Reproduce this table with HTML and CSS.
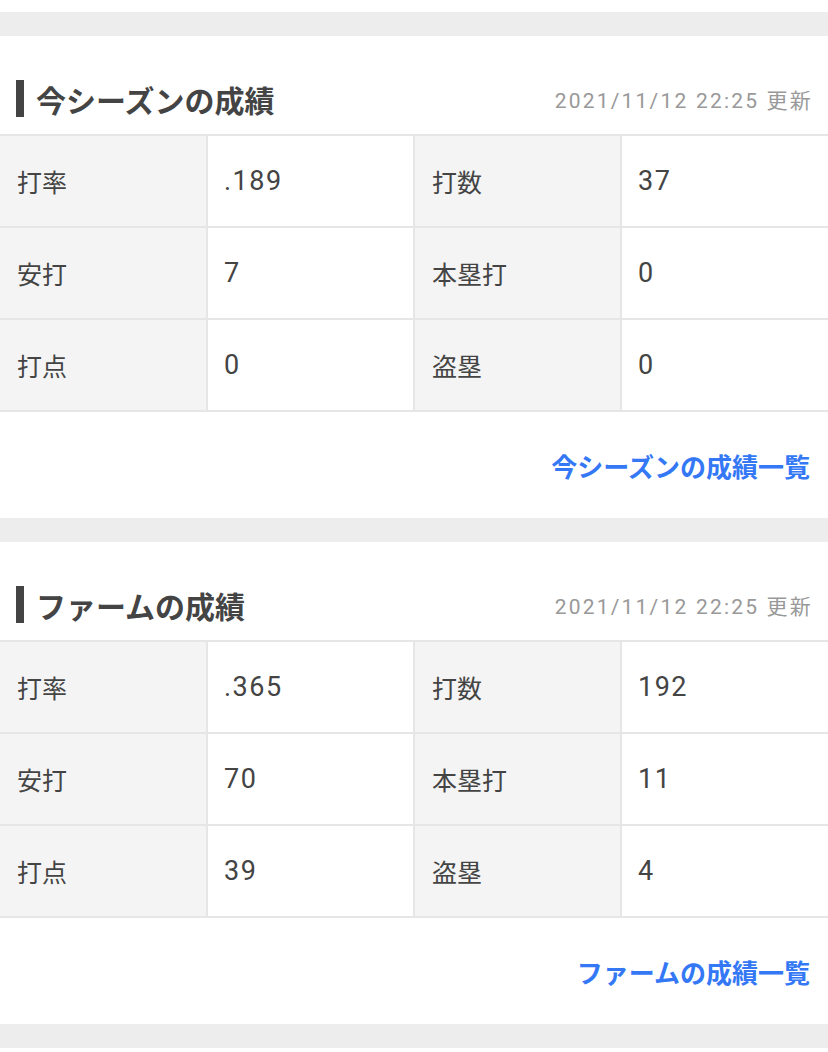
FILE: index.html
```html
<!DOCTYPE html>
<html lang="ja">
<head>
<meta charset="utf-8">
<link rel="stylesheet" href="styles.css">
</head>
<body>
<div class="top-space"></div>
<div class="divider"></div>
<section class="card">
  <div class="head">
    <h2 class="title">今シーズンの成績</h2>
    <span class="date">2021/11/12 22:25 更新</span>
  </div>
  <table class="stats">
    <tr><th>打率</th><td>.189</td><th>打数</th><td>37</td></tr>
    <tr><th>安打</th><td>7</td><th>本塁打</th><td>0</td></tr>
    <tr><th>打点</th><td>0</td><th>盗塁</th><td>0</td></tr>
  </table>
  <div class="more"><a href="#">今シーズンの成績一覧</a></div>
</section>
<div class="divider"></div>
<section class="card">
  <div class="head">
    <h2 class="title">ファームの成績</h2>
    <span class="date">2021/11/12 22:25 更新</span>
  </div>
  <table class="stats">
    <tr><th>打率</th><td>.365</td><th>打数</th><td>192</td></tr>
    <tr><th>安打</th><td>70</td><th>本塁打</th><td>11</td></tr>
    <tr><th>打点</th><td>39</td><th>盗塁</th><td>4</td></tr>
  </table>
  <div class="more"><a href="#">ファームの成績一覧</a></div>
</section>
<div class="divider"></div>
</body>
</html>
```
FILE: styles.css
```css
html, body {
  margin: 0;
  padding: 0;
  background: #fff;
  font-family: "Noto Sans CJK JP", "Noto Sans", sans-serif;
  color: #444;
}
.top-space { height: 12px; }
.divider { height: 24px; background: #ededed; }
.card { background: #fff; }
.head {
  display: flex;
  align-items: center;
  justify-content: space-between;
  padding: 44px 15px 17px 16px;
}
.title {
  margin: 0;
  height: 37px;
  display: flex;
  align-items: center;
  border-left: 8px solid #444;
  padding-left: 12px;
  font-size: 30px;
  font-weight: 700;
  line-height: 1;
  color: #444;
}
.date {
  font-family: Roboto, "Noto Sans CJK JP", sans-serif;
  font-size: 21px;
  color: #999;
  letter-spacing: 2.2px;
}
.stats {
  width: 100%;
  table-layout: fixed;
  border-collapse: collapse;
}
.stats th, .stats td {
  height: 90px;
  padding: 0 0 0 16px;
  border: 2px solid #e6e6e6;
  text-align: left;
  font-size: 25px;
  font-weight: 400;
  color: #444;
}
.stats td {
  font-family: Roboto, "Noto Sans CJK JP", sans-serif;
  font-size: 27px;
  letter-spacing: 1.5px;
}
.stats th { background: #f4f4f4; padding-left: 17px; }
.stats tr > :first-child { border-left: none; }
.stats tr > :last-child { border-right: none; }
.more {
  height: 106px;
  display: flex;
  align-items: center;
  justify-content: flex-end;
  padding-right: 18px;
}
.more a {
  color: #3478f6;
  text-decoration: none;
  font-size: 26px;
  font-weight: 700;
}
```
